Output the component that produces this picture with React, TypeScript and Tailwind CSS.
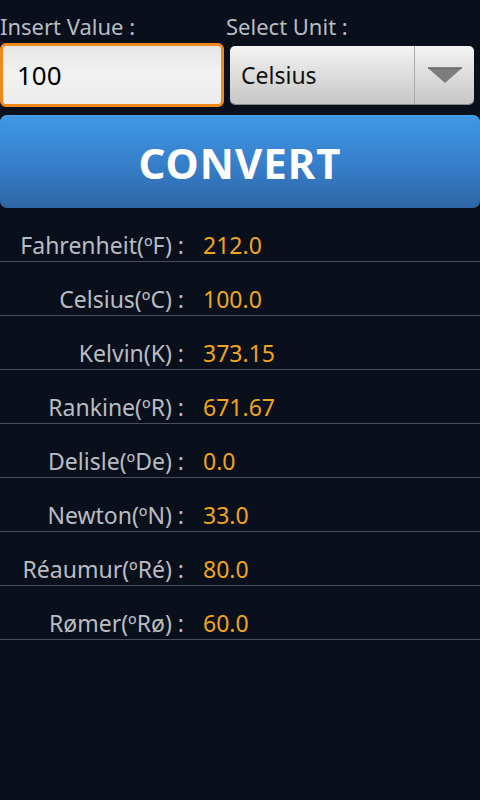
const results = [
  { label: 'Fahrenheit(ºF) :', value: '212.0' },
  { label: 'Celsius(ºC) :', value: '100.0' },
  { label: 'Kelvin(K) :', value: '373.15' },
  { label: 'Rankine(ºR) :', value: '671.67' },
  { label: 'Delisle(ºDe) :', value: '0.0' },
  { label: 'Newton(ºN) :', value: '33.0' },
  { label: 'Réaumur(ºRé) :', value: '80.0' },
  { label: 'Rømer(ºRø) :', value: '60.0' },
]

export default function App() {
  return (
    <div className="min-h-[800px] w-[480px] bg-[#0a0f1c] font-['Noto_Sans','Open_Sans',sans-serif]">
      <div className="flex pt-[12px]">
        <div className="w-[226px] text-[22px] leading-[29px] text-[#b9bdc3]">Insert Value :</div>
        <div className="text-[22px] leading-[29px] text-[#b9bdc3]">Select Unit :</div>
      </div>

      <div className="mt-[2px] flex items-center">
        <div className="flex h-[64px] w-[224px] items-center rounded-[6px] border-[3px] border-[#f0891a] bg-gradient-to-b from-[#e6e6e6] via-[#f2f2f2] to-[#ececec] pl-[14px] text-[26px] text-black">
          100
        </div>
        <div className="ml-[6px] flex h-[58px] w-[244px] items-center rounded-[5px] bg-gradient-to-b from-[#f4f4f4] to-[#c6c6c6] shadow-[0_1px_0_#888]">
          <div className="flex-1 pl-[11px] text-[23px] text-[#111]">Celsius</div>
          <div className="h-full w-px bg-[#a9a9a9]" />
          <div className="flex w-[59px] items-center justify-center">
            <svg width="34" height="17" viewBox="0 0 34 17">
              <polygon points="0,1 34,1 17,16" fill="#7d7d7d" />
              <line x1="0" y1="1" x2="34" y2="1" stroke="#666" strokeWidth="1.5" />
            </svg>
          </div>
        </div>
      </div>

      <button className="mt-[8px] flex h-[93px] w-[480px] items-center justify-center rounded-[7px] border-t border-[#4aa0ea] bg-gradient-to-b from-[#3f98e4] via-[#3780cc] to-[#2e66a6] text-[42px] font-bold tracking-[1px] text-white">
        CONVERT
      </button>

      <div className="flex flex-col">
        {results.map((r) => (
          <div key={r.label} className="flex h-[54px] items-end border-b border-[#474d5b] pb-[1px]">
            <div className="w-[186px] pr-[2px] text-right text-[23px] leading-[29px] text-[#b9bdc3]">{r.label}</div>
            <div className="pl-[17px] text-[23px] leading-[29px] text-[#f0a51e]">{r.value}</div>
          </div>
        ))}
      </div>
    </div>
  )
}
